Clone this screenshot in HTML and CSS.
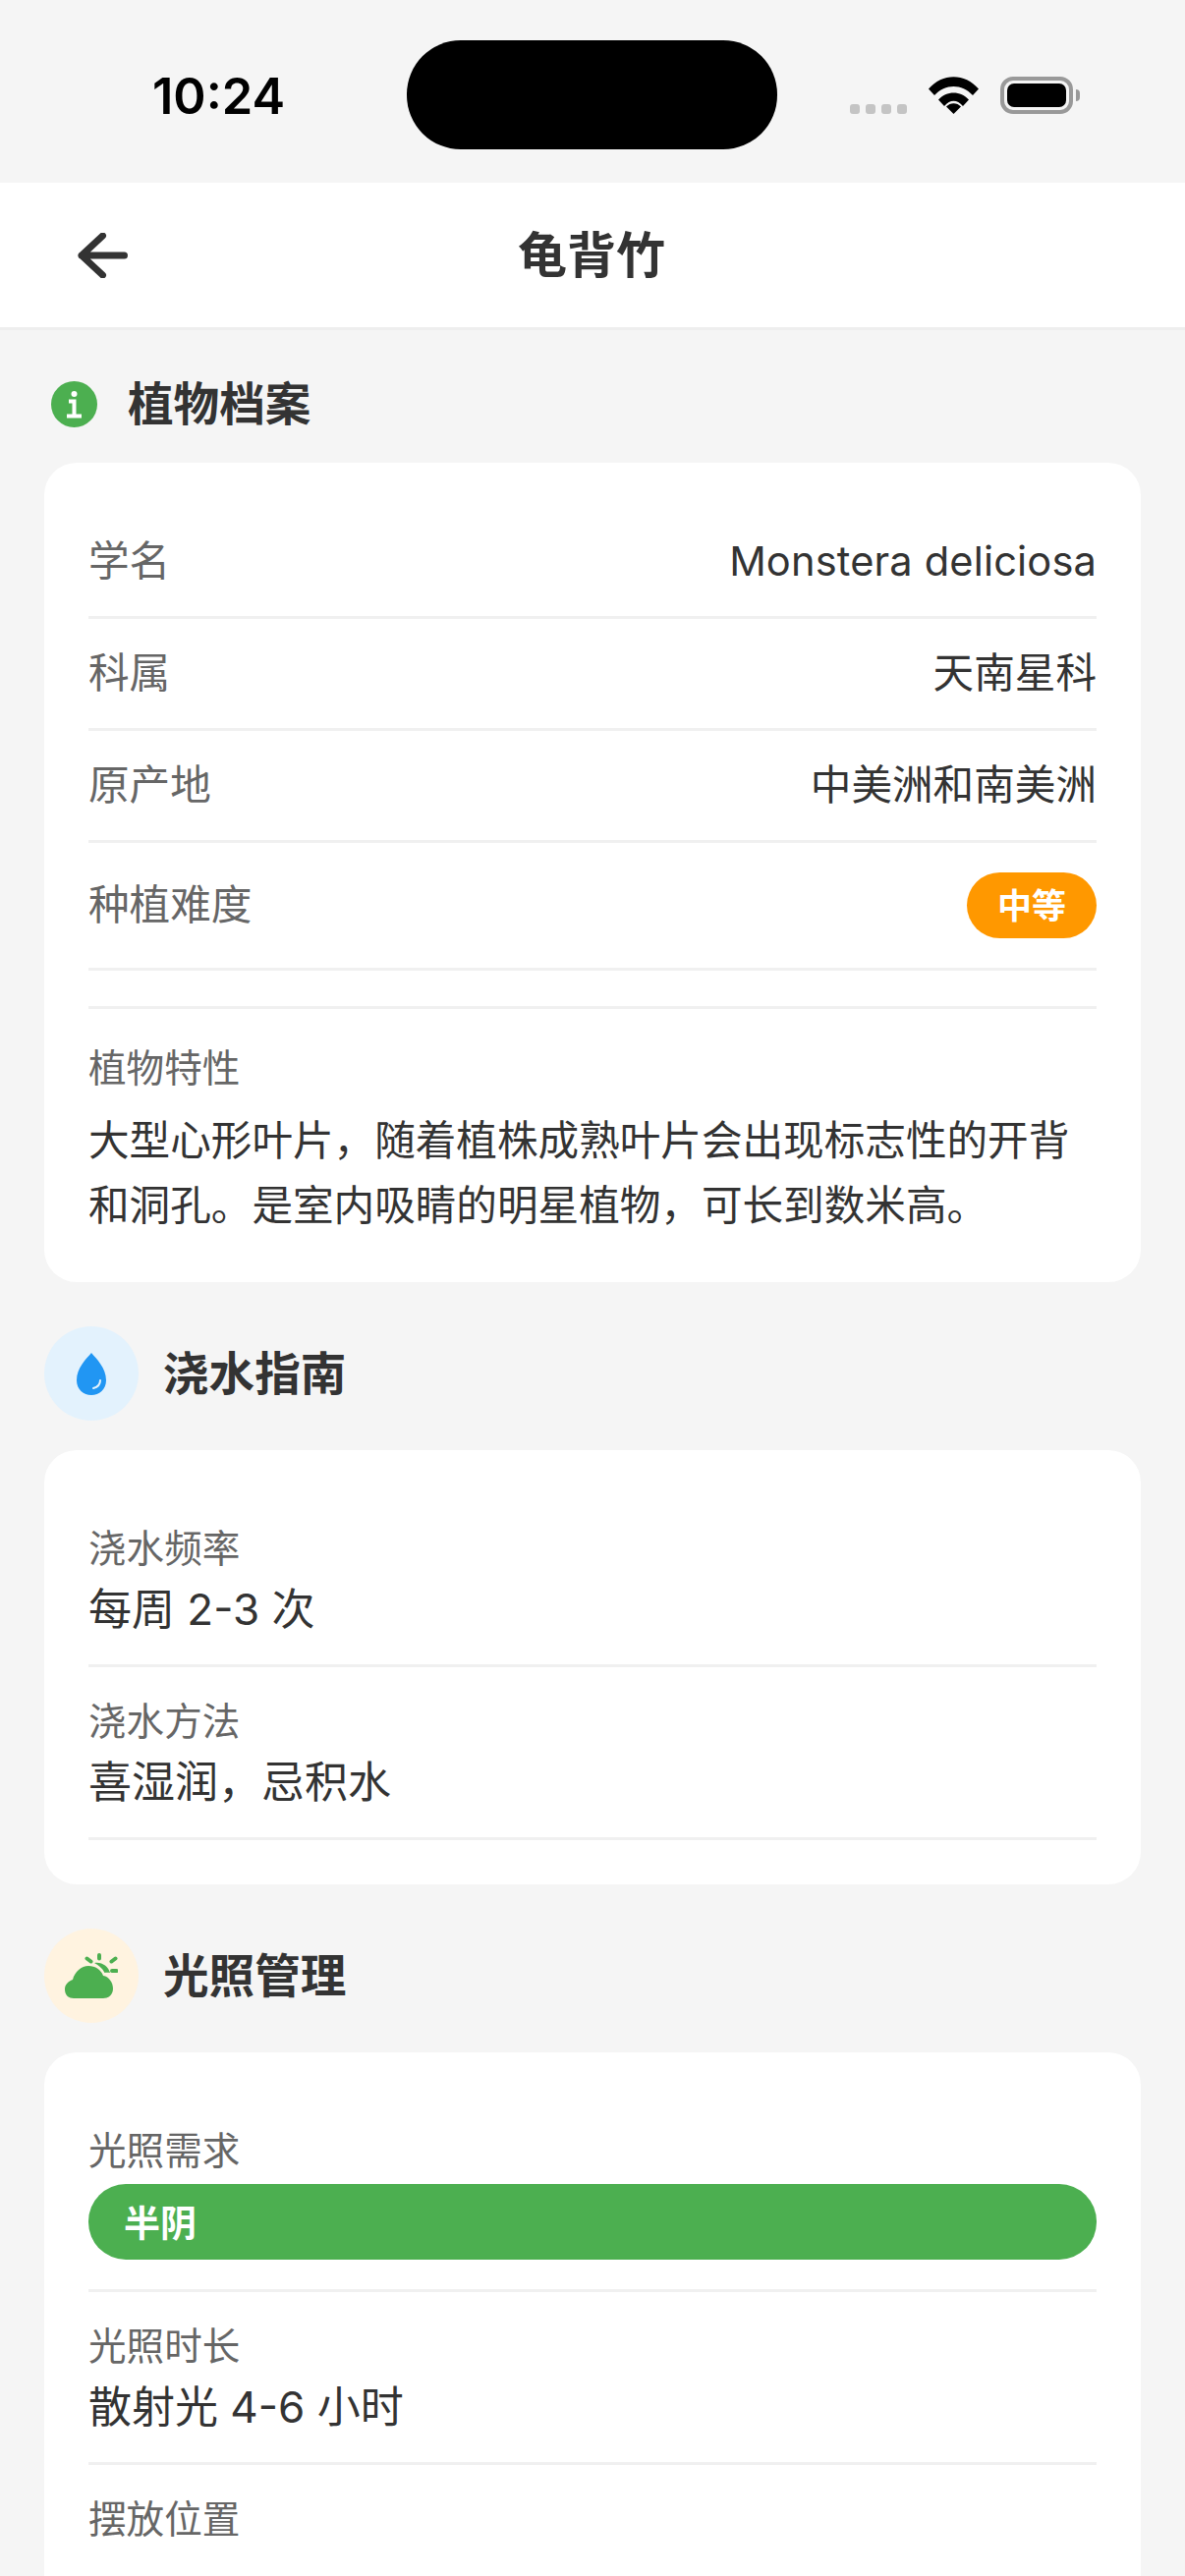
FILE: index.html
```html
<!DOCTYPE html>
<html>
<head>
  <title>龟背竹</title>
  <link rel="stylesheet" href="styles.css">
</head>
<body>
  <div class="status-bar">
    <span class="time">10:24</span>
    <div class="island"></div>
    <div class="signal"><i></i><i></i><i></i><i></i></div>
    <svg class="wifi" viewBox="0 0 51 38"><path d="M0 12.500C14 -4 37 -4 51 12.500L45 19C34 7 17 7 6 19Z"/><path d="M10 23.500C18 14 33 14 41 23.500L35 30C29 23 22 23 16 30Z"/><path d="M18 30.500C22 26 29 26 33 30.500L25.500 38Z"/></svg>
    <div class="battery"><div class="battery-fill"></div></div>
    <div class="battery-nub"></div>
  </div>

  <div class="nav">
    <svg class="back" viewBox="0 0 52 46"><path d="M48.500 23H5M26.500 3L5 23L26.500 43"/></svg>
    <h1>龟背竹</h1>
  </div>

  <div class="content">
    <div class="section">
      <div class="section-title">
        <div class="icon-plain">
          <svg viewBox="0 0 47 47"><circle class="green" cx="23.500" cy="23.500" r="23.500"/><circle class="white" cx="23.500" cy="13" r="3"/><path class="i-stem" d="M18 20.500H23.500V35M16 35.500H31"/></svg>
        </div>
        <h2>植物档案</h2>
      </div>
      <div class="card">
        <div class="row"><span class="label">学名</span><span class="value latin">Monstera deliciosa</span></div>
        <div class="row"><span class="label">科属</span><span class="value">天南星科</span></div>
        <div class="row"><span class="label">原产地</span><span class="value">中美洲和南美洲</span></div>
        <div class="row"><span class="label">种植难度</span><span class="badge">中等</span></div>
        <div class="traits">
          <div class="small-label">植物特性</div>
          <p>大型心形叶片，随着植株成熟叶片会出现标志性的开背和洞孔。是室内吸睛的明星植物，可长到数米高。</p>
        </div>
      </div>
    </div>

    <div class="section">
      <div class="section-title">
        <div class="icon-round blue-bg">
          <svg class="drop" viewBox="0 0 30 43"><path class="blue" d="M15 0C20 6 30 15 30 28C30 37 23 43 15 43C7 43 0 37 0 28C0 15 10 6 15 0Z"/><path class="shine" d="M24 28C24 32 21 35 17 36"/></svg>
        </div>
        <h2>浇水指南</h2>
      </div>
      <div class="card">
        <div class="stack"><div class="small-label">浇水频率</div><div class="stack-value">每周 2-3 次</div></div>
        <div class="stack"><div class="small-label">浇水方法</div><div class="stack-value">喜湿润，忌积水</div></div>
      </div>
    </div>

    <div class="section">
      <div class="section-title">
        <div class="icon-round orange-bg">
          <svg class="cloud" viewBox="0 0 54 46"><path class="green" d="M9 46C3 46 0 42 0 37C0 32 3 29 8 27C10 19 17 13 24 13C31 13 37 17 39 23C45 24 49 30 49 36C49 42 45 46 39 46Z"/><path class="green" d="M30 10C37 8.500 44 13 46 20C44 19.500 42 19.500 40.500 20C38 15 34 12 30 10Z"/><path class="rays" d="M35 2V5.500M22.500 5.500L26.500 8.500M51.500 5.500L47.500 8.500M48 18H52.500"/></svg>
        </div>
        <h2>光照管理</h2>
      </div>
      <div class="card">
        <div class="stack"><div class="small-label">光照需求</div><div class="pill">半阴</div></div>
        <div class="stack"><div class="small-label">光照时长</div><div class="stack-value">散射光 4-6 小时</div></div>
        <div class="stack stack-last"><div class="small-label">摆放位置</div></div>
      </div>
    </div>
  </div>
</body>
</html>
```

FILE: styles.css
```css
html, body {
  margin: 0;
  height: 2622px;
  overflow: hidden;
}
body {
  background: #f5f5f5;
  font-family: Inter, "Noto Sans CJK SC", sans-serif;
  color: #333;
}
h1, h2, p {
  margin: 0;
}

.status-bar {
  height: 186px;
  display: flex;
  align-items: flex-start;
  padding-left: 155px;
  box-sizing: border-box;
}
.time {
  width: 259px;
  margin-top: 69px;
  font-size: 50.500px;
  line-height: 58px;
  font-weight: 600;
  color: #000;
}
.island {
  width: 377px;
  height: 111px;
  margin-top: 41px;
  background: #000;
  border-radius: 55px;
}
.signal {
  display: flex;
  gap: 6px;
  margin: 106px 0 0 74px;
}
.signal i {
  width: 10px;
  height: 10px;
  border-radius: 3px;
  background: #c4c4c4;
}
.wifi {
  width: 51px;
  height: 38px;
  margin: 78px 0 0 22px;
}
.battery {
  width: 74px;
  height: 38px;
  margin: 78px 0 0 22px;
  box-sizing: border-box;
  border: 4px solid #999;
  border-radius: 13px;
  padding: 3px;
}
.battery-fill {
  height: 100%;
  background: #000;
  border-radius: 7px;
}
.battery-nub {
  width: 4px;
  height: 12px;
  margin: 91px 0 0 3px;
  background: #999;
  border-radius: 0 4px 4px 0;
}

.nav {
  height: 150px;
  box-sizing: border-box;
  background: #fff;
  border-bottom: 3px solid #eee;
  display: flex;
  align-items: center;
  padding-left: 78px;
}
.back {
  width: 52px;
  height: 46px;
  fill: none;
  stroke: #333;
  stroke-width: 7;
  stroke-linecap: round;
  stroke-linejoin: round;
}
.nav h1 {
  width: 944px;
  margin-bottom: 7px;
  text-align: center;
  font-size: 50px;
  font-weight: 700;
}

.content {
  padding: 45px 45px 0;
}
.section {
  margin-bottom: 45px;
}
.section-title {
  display: flex;
  align-items: center;
  gap: 25px;
  margin-bottom: 30px;
}
.section-title h2 {
  font-size: 46.600px;
  font-weight: 700;
  line-height: 60px;
}
.icon-plain {
  width: 60px;
  height: 60px;
  display: flex;
  align-items: center;
  justify-content: center;
}
.icon-plain svg {
  width: 47px;
  height: 47px;
}
.icon-round {
  width: 96px;
  height: 96px;
  border-radius: 50%;
  display: flex;
  align-items: center;
  justify-content: center;
}
.drop {
  width: 30px;
  height: 43px;
}
.cloud {
  width: 54px;
  height: 46px;
}
.blue-bg {
  background: #e3f2fd;
}
.orange-bg {
  background: #fff3e0;
}
.green {
  fill: #4caf50;
}
.white {
  fill: #fff;
}
.blue {
  fill: #2196f3;
}
.shine {
  fill: none;
  stroke: #e3f2fd;
  stroke-width: 2;
  stroke-linecap: round;
}
.i-stem {
  fill: none;
  stroke: #fff;
  stroke-width: 4;
}
.rays {
  fill: none;
  stroke: #4caf50;
  stroke-width: 4;
  stroke-linecap: round;
}

.card {
  background: #fff;
  border-radius: 33px;
  padding: 45px;
}
.row {
  display: flex;
  justify-content: space-between;
  align-items: center;
  padding: 30px 0;
  border-bottom: 3px solid #f0f0f0;
}
.label {
  font-size: 41.600px;
  line-height: 51px;
  color: #666;
}
.value {
  font-size: 41.600px;
  line-height: 51px;
  color: #333;
}
.latin {
  letter-spacing: 0.15px;
}
.badge {
  height: 67px;
  background: #ff9800;
  color: #fff;
  font-size: 35px;
  font-weight: 700;
  line-height: 69px;
  padding: 0 31px;
  border-radius: 34px;
}
.traits {
  margin-top: 36px;
  border-top: 3px solid #f0f0f0;
  padding-top: 35px;
}
.small-label {
  font-size: 38.600px;
  line-height: 50px;
  color: #666;
}
.traits p {
  margin-top: 16px;
  font-size: 41.600px;
  line-height: 66px;
}
.stack {
  padding: 30px 0;
  border-bottom: 3px solid #f0f0f0;
}
.stack-last {
  border-bottom: none;
}
.stack-value {
  font-size: 44px;
  line-height: 52px;
  margin-top: 11px;
}
.pill {
  margin-top: 9px;
  height: 77px;
  line-height: 81px;
  padding-left: 36px;
  background: #4caf50;
  border-radius: 38px;
  color: #fff;
  font-size: 37px;
  font-weight: 700;
}
```
